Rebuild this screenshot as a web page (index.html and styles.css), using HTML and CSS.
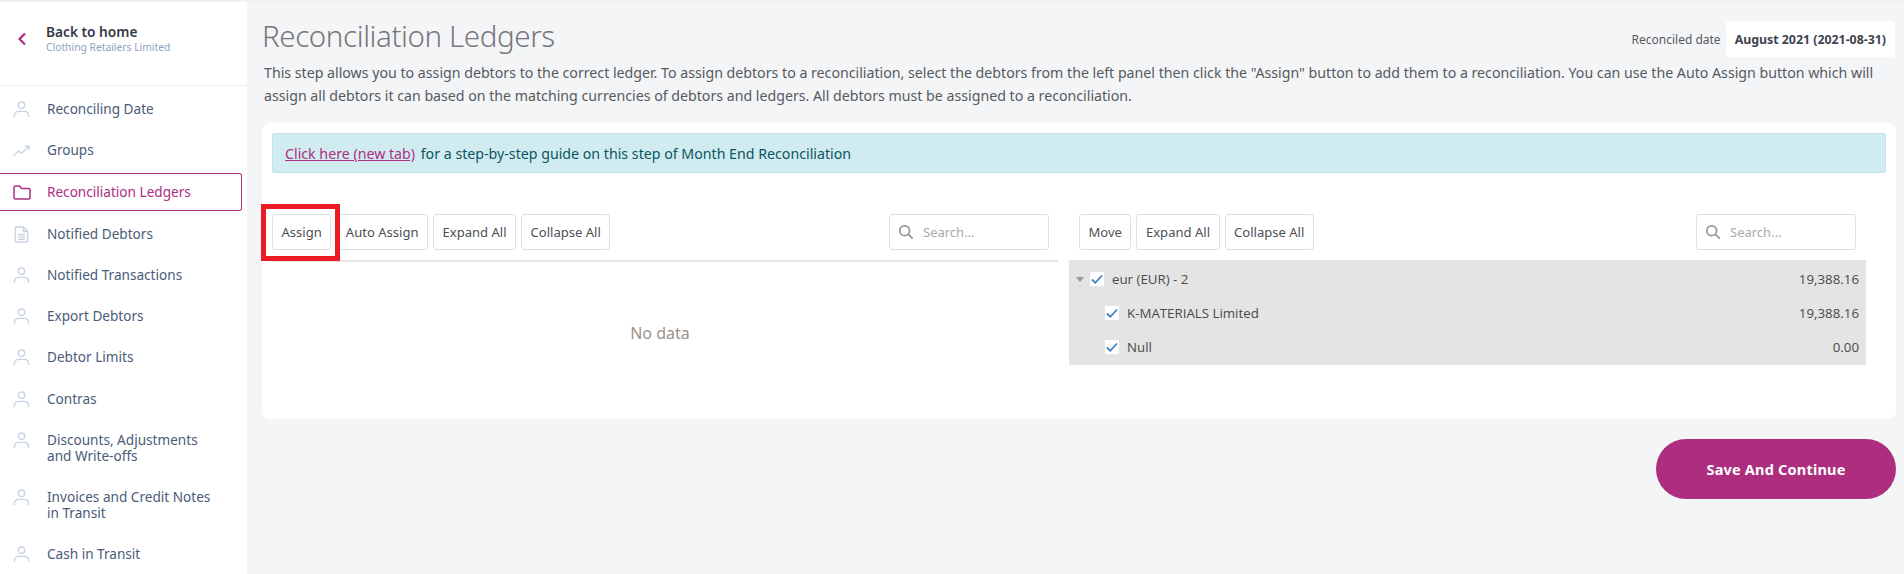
FILE: index.html
```html
<!DOCTYPE html>
<html lang="en">
<head>
<meta charset="utf-8">
<title>Reconciliation Ledgers</title>
<link rel="stylesheet" href="styles.css">
</head>
<body>
<svg class="defs" width="0" height="0" aria-hidden="true">
  <symbol id="i-user" viewBox="0 0 18 18"><circle cx="9" cy="4.500" r="3.400"/><path d="M1.500 17v-1.500c0-3 2.200-4.500 4.800-4.500h5.400c2.600 0 4.800 1.500 4.800 4.500V17"/></symbol>
  <symbol id="i-trend" viewBox="0 0 18 18"><path d="M.5 14.500 6 9.500l3 2.500 8-7.500M12.500 4.500h4.700v4"/></symbol>
  <symbol id="i-folder" viewBox="0 0 18 18"><path d="M1 4.500c0-1 .6-1.500 1.500-1.500h4l2 2.500h7c.9 0 1.500.6 1.500 1.500v7.500c0 .9-.6 1.500-1.500 1.500h-13c-.9 0-1.500-.6-1.500-1.500z"/></symbol>
  <symbol id="i-doc" viewBox="0 0 18 18"><path d="M2.500 1h8.500l4.500 4.500V16c0 .6-.4 1-1 1H3.500c-.6 0-1-.4-1-1V2c0-.6.4-1 1-1zM11 1v4.500h4.500M5.500 9h7M5.500 11.500h7M5.500 14h7"/></symbol>
  <symbol id="i-search" viewBox="0 0 18 18"><circle cx="7.500" cy="7.500" r="5.500"/><path d="m11.500 11.500 5 5"/></symbol>
</svg>
<div class="app">
  <aside class="sidebar">
    <div class="back">
      <svg class="back-arrow" viewBox="0 0 10 14"><path d="M8 1.500 2.500 7 8 12.500"/></svg>
      <div>
        <div class="back-title">Back to home</div>
        <div class="back-sub">Clothing Retailers Limited</div>
      </div>
    </div>
    <nav class="nav">
      <a class="nav-item"><svg class="nav-icon"><use href="#i-user"/></svg><span>Reconciling Date</span></a>
      <a class="nav-item"><svg class="nav-icon"><use href="#i-trend"/></svg><span>Groups</span></a>
      <a class="nav-item active"><svg class="nav-icon"><use href="#i-folder"/></svg><span>Reconciliation Ledgers</span></a>
      <a class="nav-item"><svg class="nav-icon"><use href="#i-doc"/></svg><span>Notified Debtors</span></a>
      <a class="nav-item"><svg class="nav-icon"><use href="#i-user"/></svg><span>Notified Transactions</span></a>
      <a class="nav-item"><svg class="nav-icon"><use href="#i-user"/></svg><span>Export Debtors</span></a>
      <a class="nav-item"><svg class="nav-icon"><use href="#i-user"/></svg><span>Debtor Limits</span></a>
      <a class="nav-item"><svg class="nav-icon"><use href="#i-user"/></svg><span>Contras</span></a>
      <a class="nav-item"><svg class="nav-icon"><use href="#i-user"/></svg><span>Discounts, Adjustments<br>and Write-offs</span></a>
      <a class="nav-item"><svg class="nav-icon"><use href="#i-user"/></svg><span>Invoices and Credit Notes<br>in Transit</span></a>
      <a class="nav-item"><svg class="nav-icon"><use href="#i-user"/></svg><span>Cash in Transit</span></a>
    </nav>
  </aside>
  <main class="main">
    <header class="head">
      <h1 class="title">Reconciliation Ledgers</h1>
      <div class="date">
        <span class="date-label">Reconciled date</span>
        <span class="date-value">August 2021 (2021-08-31)</span>
      </div>
    </header>
    <p class="desc">This step allows you to assign debtors to the correct ledger. To assign debtors to a reconciliation, select the debtors from the left panel then click the "Assign" button to add them to a reconciliation. You can use the Auto Assign button which will assign all debtors it can based on the matching currencies of debtors and ledgers. All debtors must be assigned to a reconciliation.</p>
    <section class="card">
      <div class="alert"><a class="alert-link">Click here (new tab)</a> for a step-by-step guide on this step of Month End Reconciliation</div>
      <div class="panels">
        <div class="panel">
          <div class="toolbar">
            <button class="btn btn-marked">Assign</button>
            <button class="btn">Auto Assign</button>
            <button class="btn">Expand All</button>
            <button class="btn">Collapse All</button>
            <label class="search"><svg class="search-icon"><use href="#i-search"/></svg><span>Search...</span></label>
          </div>
          <div class="empty">No data</div>
        </div>
        <div class="panel panel-right">
          <div class="toolbar">
            <button class="btn">Move</button>
            <button class="btn">Expand All</button>
            <button class="btn">Collapse All</button>
            <label class="search search-right"><svg class="search-icon"><use href="#i-search"/></svg><span>Search...</span></label>
          </div>
          <div class="tree">
            <div class="tree-row"><i class="caret"></i><i class="check"><svg viewBox="0 0 14 14"><path d="m2 7.500 3.300 3.300L12 3.500"/></svg></i><span class="tree-name">eur (EUR) - 2</span><span>19,388.16</span></div>
            <div class="tree-row tree-child"><i class="check"><svg viewBox="0 0 14 14"><path d="m2 7.500 3.300 3.300L12 3.500"/></svg></i><span class="tree-name">K-MATERIALS Limited</span><span>19,388.16</span></div>
            <div class="tree-row tree-child"><i class="check"><svg viewBox="0 0 14 14"><path d="m2 7.500 3.300 3.300L12 3.500"/></svg></i><span class="tree-name">Null</span><span>0.00</span></div>
          </div>
        </div>
      </div>
    </section>
    <div class="actions"><button class="save">Save And Continue</button></div>
  </main>
</div>
</body>
</html>
```
FILE: styles.css
```css
* { box-sizing: border-box; }
html, body { margin: 0; height: 100%; overflow: hidden; }
body { background: #f4f5f7; font-family: "Noto Sans", sans-serif; color: #555; }
.defs { position: absolute; }
.app { display: flex; height: 574px; overflow: hidden; border-top: 2px solid #f0f1f2; }
.sidebar { width: 247px; flex: none; background: #fff; }
.back { height: 84px; display: flex; align-items: flex-start; padding: 21px 0 0 17px; border-bottom: 1px solid #ebedf0; }
.back-arrow { width: 10px; height: 14px; margin: 9px 19px 0 0; fill: none; stroke: #ad2e7f; stroke-width: 2.200; }
.back-title { font-size: 13.700px; font-weight: 600; line-height: 18px; color: #343a46; }
.back-sub { font-size: 10.300px; line-height: 13px; color: #8fa2b8; }
.nav { padding-top: 2px; }
.nav-item { display: flex; align-items: flex-start; gap: 17px; padding: 12.650px 0 12.650px 13px; font-size: 13.600px; line-height: 16px; color: #4a5b78; }
.nav-icon { width: 17px; height: 17px; margin-bottom: -1px; flex: none; fill: none; stroke: #c9d5e6; stroke-width: 1.500; }
.nav-item.active { color: #ad2e7f; width: 242px; height: 38px; margin: 2.300px 0 2px; padding-top: 10.500px; padding-bottom: 0; gap: 16px; border: 1px solid #ad2e7f; border-left: 0; border-radius: 0 3px 3px 0; }
.nav-item.active .nav-icon { stroke: #ad2e7f; width: 18px; height: 18px; margin-top: -1px; }
.main { flex: 1; min-width: 0; padding: 0 8px 0 15px; }
.head { display: flex; justify-content: space-between; align-items: flex-start; height: 58px; padding-top: 19px; padding-right: 1px; }
.title { margin: -3px 0 0; font-size: 29.500px; font-weight: 300; letter-spacing: -.4px; line-height: 36px; color: #76787b; font-family: "Noto Sans", sans-serif; }
.date { display: flex; align-items: center; }
.date-label { font-size: 12px; color: #55595f; margin-right: 5px; }
.date-value { background: #fff; border-radius: 3px; height: 36px; display: flex; align-items: center; padding: 0 9px; font-size: 12.350px; font-weight: 700; color: #3d4350; }
.desc { margin: 0; padding: 1px 2px 0; font-size: 14.180px; line-height: 23px; color: #555a60; height: 63px; }
.card { background: #fff; border-radius: 8px; height: 296px; padding: 10px; }
.alert { height: 40px; background: #d1ecf1; border: 1px solid #bee5eb; border-radius: 2px; padding: 0 12px; display: flex; align-items: center; gap: 2px; font-size: 14.200px; color: #0c5460; white-space: pre; }
.alert-link { color: #ad2e7f; text-decoration: underline; }
.panels { display: flex; margin-top: 41px; }
.panel { width: 786px; flex: none; }
.panel-right { width: 797px; margin-left: 11px; }
.toolbar { display: flex; gap: 5px; height: 46px; }
.panel-right .toolbar { padding: 0 10px; }
.btn { height: 36px; padding: 0 8.500px; background: #fff; border: 1px solid #dcdfe3; border-radius: 3px; font: 13.050px "Noto Sans", sans-serif; color: #4b4f58; }
.btn-marked { position: relative; }
.btn-marked::after { content: ""; position: absolute; inset: -11px -10px -12px -12px; border: 5px solid #ed1c24; pointer-events: none; }
.search { width: 160px; height: 36px; margin-left: auto; margin-right: 9px; display: flex; align-items: center; gap: 9px; padding-left: 8px; border: 1px solid #dcdfe3; border-radius: 3px; font-size: 13px; color: #a9a9a9; }
.search-right { margin-right: 0; }
.search-icon { width: 16px; height: 16px; fill: none; stroke: #999; stroke-width: 2; }
.empty { border-top: 2px solid #e4e4e4; height: 144px; padding-right: 10px; display: flex; align-items: center; justify-content: center; font-size: 16px; color: #98928c; }
.tree { background: #e4e4e4; height: 105px; padding: 2px 7px 0 7px; font: 13.300px "Open Sans", sans-serif; color: #4a4a4a; }
.tree-row { display: flex; align-items: center; height: 34px; }
.tree-child { padding-left: 29px; }
.tree-name { flex: 1; margin-left: 8px; }
.caret { width: 0; height: 0; border: 4.500px solid transparent; border-top: 5px solid #9a9a9a; border-bottom: 0; margin-right: 6px; }
.check { width: 14px; height: 14px; background: #fff; display: block; flex: none; }
.check svg { display: block; width: 14px; height: 14px; fill: none; stroke: #3d80c4; stroke-width: 1.800; }
.actions { display: flex; justify-content: flex-end; margin-top: 20px; }
.save { width: 240px; height: 60px; border: 0; border-radius: 30px; background: #ad2e7f; color: #fff; font: 700 14.500px "Noto Sans", sans-serif; letter-spacing: .2px; }
```
